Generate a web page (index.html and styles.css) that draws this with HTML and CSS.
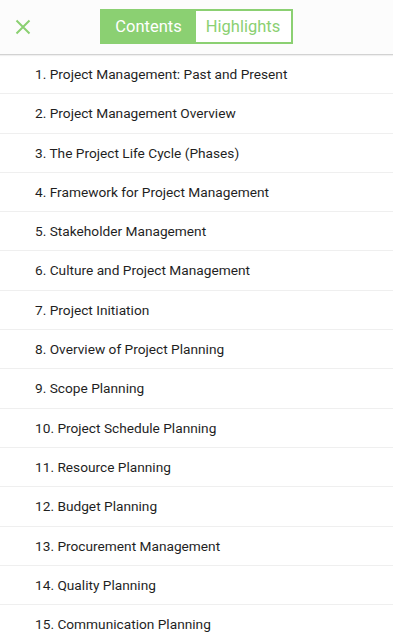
FILE: index.html
```html
<!DOCTYPE html>
<html>
<head>
<meta charset="utf-8">
<link rel="stylesheet" href="styles.css">
</head>
<body>
<div class="header">
  <div class="close">
    <svg width="16" height="16" viewBox="0 0 16 16"><path d="M1.5 1.5 L14.5 14.5 M14.5 1.5 L1.5 14.5" stroke="#8bd072" stroke-width="2" fill="none"/></svg>
  </div>
  <div class="seg">
    <div class="seg-item active">Contents</div>
    <div class="seg-item">Highlights</div>
  </div>
</div>
<ul class="list">
  <li>1. Project Management: Past and Present</li>
  <li>2. Project Management Overview</li>
  <li>3. The Project Life Cycle (Phases)</li>
  <li>4. Framework for Project Management</li>
  <li>5. Stakeholder Management</li>
  <li>6. Culture and Project Management</li>
  <li>7. Project Initiation</li>
  <li>8. Overview of Project Planning</li>
  <li>9. Scope Planning</li>
  <li>10. Project Schedule Planning</li>
  <li>11. Resource Planning</li>
  <li>12. Budget Planning</li>
  <li>13. Procurement Management</li>
  <li>14. Quality Planning</li>
  <li>15. Communication Planning</li>
</ul>
</body>
</html>
```
FILE: styles.css
```css
html, body { margin: 0; padding: 0; background: #fff; }
body { font-family: Roboto, "Liberation Sans", sans-serif; width: 393px; height: 633px; overflow: hidden; }
.header {
  height: 54px;
  background: #fcfcfc;
  border-bottom: 1px solid #d2d2d2;
  box-shadow: 0 1px 1px rgba(0,0,0,0.06);
  position: relative;
  display: flex;
  align-items: flex-start;
  justify-content: center;
}
.close { position: absolute; left: 15px; top: 19px; width: 16px; height: 16px; display: flex; }
.seg {
  display: flex;
  margin-top: 9px;
  border: 2px solid #8bd072;
  background: #8bd072;
  height: 31px;
  margin-left: -1px;
}
.seg-item {
  display: flex; align-items: center; justify-content: center;
  font-size: 16.5px; color: #8bd072; background: #fff;
  width: 95px;
}
.seg-item.active { background: #8bd072; color: #fff; width: 94px; }
.list { list-style: none; margin: 0; padding: 0; }
.list li {
  height: 38.3px;
  line-height: 38.3px;
  border-bottom: 1px solid #efefef;
  padding-left: 35px;
  font-size: 13.7px;
  color: #1f1f1f;
}
```
